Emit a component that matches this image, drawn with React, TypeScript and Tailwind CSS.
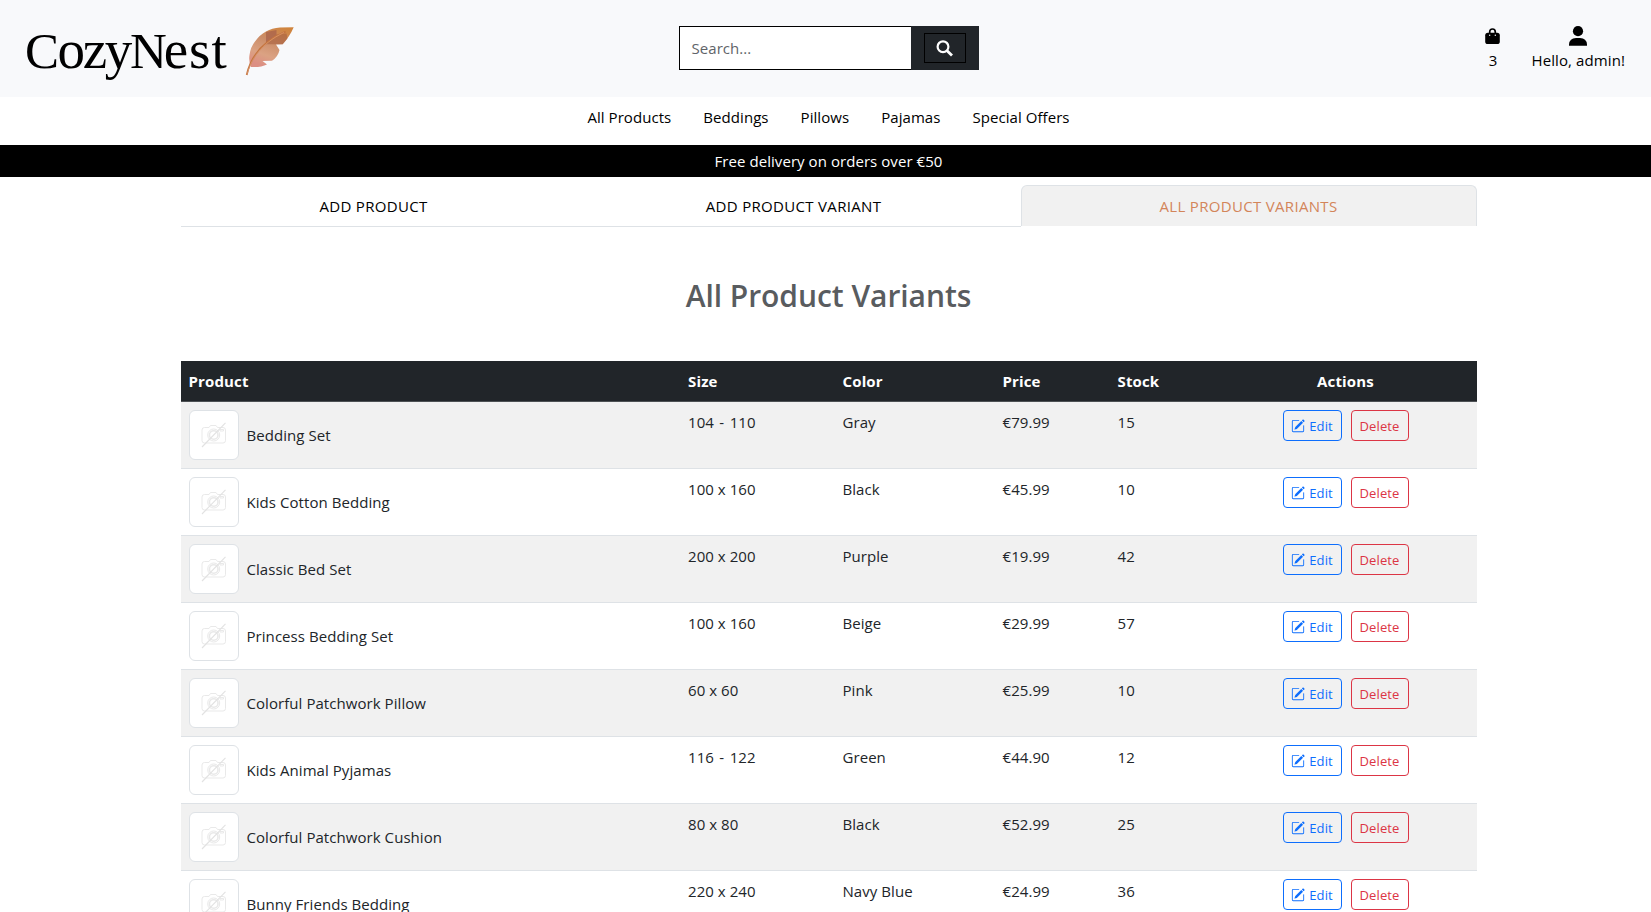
import React from "react";
import { BsPencilSquare } from "react-icons/bs";

const products = [
  ["Bedding Set", "104 - 110", "Gray", "€79.99", "15"],
  ["Kids Cotton Bedding", "100 x 160", "Black", "€45.99", "10"],
  ["Classic Bed Set", "200 x 200", "Purple", "€19.99", "42"],
  ["Princess Bedding Set", "100 x 160", "Beige", "€29.99", "57"],
  ["Colorful Patchwork Pillow", "60 x 60", "Pink", "€25.99", "10"],
  ["Kids Animal Pyjamas", "116 - 122", "Green", "€44.90", "12"],
  ["Colorful Patchwork Cushion", "80 x 80", "Black", "€52.99", "25"],
  ["Bunny Friends Bedding", "220 x 240", "Navy Blue", "€24.99", "36"],
];

const columns = "grid grid-cols-[499.500px_154.500px_160px_115px_105px_262px]";

function Feather() {
  return (
    <svg width="50" height="50" viewBox="0 0 50 50" className="block">
      <defs>
        <linearGradient id="vane" x1="0.8" y1="0" x2="0.4" y2="1">
          <stop offset="0" stopColor="#d0843c" />
          <stop offset="0.4" stopColor="#cb8d68" />
          <stop offset="0.75" stopColor="#dba283" />
          <stop offset="1" stopColor="#dc8f83" />
        </linearGradient>
      </defs>
      <path d="M48.700 1.300Q45 10 37.700 18.300L31 18.500L34.500 24Q33 31 27 34.700L17.500 35L22 38.500Q16 41.500 6 41Q3.500 35 4.500 29Q5.500 21 10 15.500Q14.500 9 21 5.500Q27 2 35 1.500Z" fill="url(#vane)" />
      <path d="M21 6L31.500 4V11L21 17Z" fill="#a86249" opacity="0.75" />
      <path d="M31.500 8.500L41.500 7.500L42.500 12.500L37.700 18.300H21V17L31.500 11Z" fill="#a9613f" opacity="0.6" />
      <path d="M1.700 49C5 34 14 17 40.600 5.700" fill="none" stroke="#c4743f" strokeWidth="1.800" />
      <path d="M1.900 48.500C6 34 15 18 39 6.500" fill="none" stroke="#e0a27c" strokeWidth="0.600" />
    </svg>
  );
}

function NoPhoto() {
  return (
    <svg width="26" height="26" viewBox="0 0 26 26" fill="none" stroke="#e9e9e9" strokeWidth="1">
      <path d="M3.500 5.500H8L9.500 3.500H15L16.500 5.500H22Q24.500 5.500 24.500 8V18.500Q24.500 21 22 21H3.500Q1 21 1 18.500V8Q1 5.500 3.500 5.500Z" />
      <circle cx="12.700" cy="13" r="6" />
      <circle cx="12.700" cy="13" r="4.300" strokeWidth="1.600" />
      <path d="M19 7.500H22.500V9H19Z" />
      <path d="M1 25L24.500 0.800" stroke="#e2e2e2" strokeWidth="1.100" />
    </svg>
  );
}

function Magnifier() {
  return (
    <svg width="17" height="17" viewBox="0 0 17 17" fill="none" stroke="currentColor">
      <circle cx="7" cy="6.700" r="5.400" strokeWidth="2.200" />
      <path d="M10.800 10.500L16 15.500" strokeWidth="2.800" />
    </svg>
  );
}

function Bag() {
  return (
    <svg width="15" height="16" viewBox="0 0 15 16">
      <path d="M4.700 6V4Q4.700 1 7.500 1T10.300 4V6" fill="none" stroke="currentColor" strokeWidth="1.700" />
      <rect x="0.200" y="4.700" width="14.600" height="11.300" rx="2.600" fill="currentColor" />
      <circle cx="4.700" cy="7.300" r="0.700" fill="#fff" />
      <circle cx="10.300" cy="7.300" r="0.700" fill="#fff" />
    </svg>
  );
}

function Person() {
  return (
    <svg width="18" height="20" viewBox="0 0 18 20" fill="currentColor">
      <circle cx="9" cy="5.200" r="5.100" />
      <path d="M0 19.800V18.500Q0.500 12 7 12H11Q17.500 12 18 18.500V19.800Z" />
    </svg>
  );
}

export default function App() {
  return (
    <div className="h-[912px] w-full overflow-hidden bg-white font-['Open_Sans',sans-serif] text-[15px] leading-6 tracking-[0.06px] text-[#212529]">
      <div className="w-[1657px]">
        <header className="grid h-[97px] grid-cols-[1fr_300px_1fr] items-start bg-[#f8f9fb] text-black">
          <div className="flex items-start pl-[25px] pt-[26px]">
            <h1 className="w-[220px] whitespace-nowrap font-['Liberation_Serif',serif] text-[51px] leading-[48px]">
              <span className="tracking-[-1.5px]">C</span>
              <span className="text-[55px] leading-[48px] tracking-[-2.3px]">ozy</span>
              <span className="tracking-[-3.2px]">N</span>
              <span className="text-[55px] leading-[48px] tracking-[1px]">est</span>
            </h1>
            <Feather />
          </div>
          <div className="mt-[26px] flex h-11">
            <div className="flex w-[232px] items-center border border-r-0 border-black bg-white pl-3 text-[#5f6469]">Search...</div>
            <button className="flex w-[68px] items-center justify-center bg-[#212529] text-white">
              <span className="flex h-[30px] w-[42px] items-center justify-center border border-black">
                <Magnifier />
              </span>
            </button>
          </div>
          <div className="flex justify-end gap-[31px] pr-8 pt-[26px]">
            <div className="flex flex-col items-center">
              <span className="flex h-[22px] items-start pt-[2px]"><Bag /></span>
              <span>3</span>
            </div>
            <div className="flex flex-col items-center">
              <span className="flex h-[22px] items-start"><Person /></span>
              <span className="tracking-[0.1px]">Hello, admin!</span>
            </div>
          </div>
        </header>
        <nav className="flex h-12 justify-center gap-8 pt-2 text-black">
          <a>All Products</a>
          <a>Beddings</a>
          <a>Pillows</a>
          <a>Pajamas</a>
          <a>Special Offers</a>
        </nav>
        <div className="flex h-8 items-center justify-center bg-black text-white">Free delivery on orders over €50</div>
        <main className="mx-auto w-[1296px] pt-2">
          <div className="grid h-[42px] grid-cols-[386px_454px_456px] text-center leading-[42px] tracking-[0.32px] text-black">
            <div className="h-[42px] border-b border-[#dee2e6]">ADD PRODUCT</div>
            <div className="h-[42px] border-b border-[#dee2e6]">ADD PRODUCT VARIANT</div>
            <div className="h-[41px] rounded-t-md border border-b-0 border-[#dee2e6] bg-[#f1f1f1] leading-10 text-[#d3855a]">ALL PRODUCT VARIANTS</div>
          </div>
          <h2 className="mt-[49px] text-center text-[30px] font-semibold leading-[40px] tracking-[-0.05px] text-[#595c5f]">All Product Variants</h2>
          <div className="mt-[45px]">
            <div className={columns + " h-[41px] border-b border-[#4d5154] bg-[#212529] pt-2 font-bold tracking-[0.15px] text-white"}>
              <div className="pl-2">Product</div>
              <div className="pl-2">Size</div>
              <div className="pl-2">Color</div>
              <div className="pl-2">Price</div>
              <div className="pl-2">Stock</div>
              <div className="text-center">Actions</div>
            </div>
            {products.map(([name, size, color, price, stock], i) => (
              <div key={name} className={columns + " h-[67px] border-b border-[#dee2e6] pt-2 " + (i % 2 === 0 ? "bg-[#f1f1f1]" : "bg-white")}>
                <div className="flex h-[50px] items-center gap-2 pl-2">
                  <span className="flex size-[50px] items-center justify-center rounded-md border border-[#dee2e6] bg-white"><NoPhoto /></span>
                  <span>{name}</span>
                </div>
                <div className={size.includes("-") ? "pl-2 [word-spacing:1.5px]" : "pl-2"}>{size}</div>
                <div className="pl-2">{color}</div>
                <div className="pl-2">{price}</div>
                <div className="pl-2">{stock}</div>
                <div className="flex items-start justify-center gap-[9px] text-[13px]">
                  <button className="flex h-[31px] w-[59px] items-center justify-center gap-1 rounded border border-[#0d6efd] text-[#0d6efd]">
                    <BsPencilSquare size={14} />
                    Edit
                  </button>
                  <button className="h-[31px] w-[58px] rounded border border-[#dc3545] tracking-[0.1px] text-[#dc3545]">Delete</button>
                </div>
              </div>
            ))}
          </div>
        </main>
      </div>
    </div>
  );
}
